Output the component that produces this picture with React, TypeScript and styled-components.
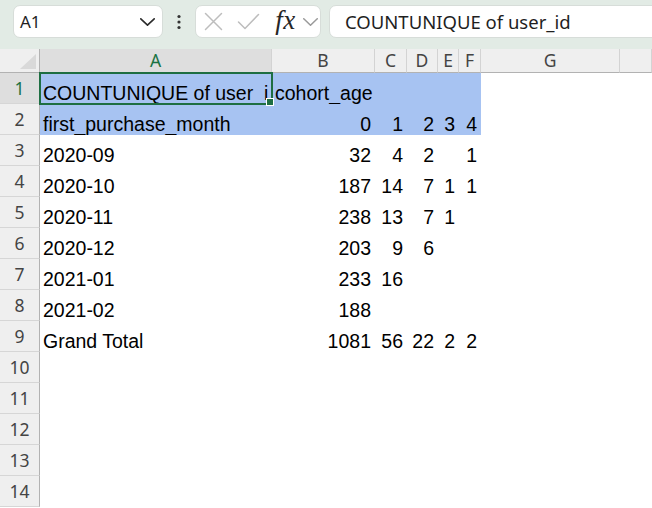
import React from 'react';
import styled, { createGlobalStyle } from 'styled-components';

const GlobalStyle = createGlobalStyle`
  html, body { margin: 0; padding: 0; background: #ffffff; }
  body { width: 652px; height: 508px; overflow: hidden; }
`;

const Window = styled.div`
  width: 652px;
  height: 508px;
  overflow: hidden;
  display: flex;
  flex-direction: column;
  background: #ffffff;
`;

const Toolbar = styled.div`
  height: 49px;
  flex: none;
  box-sizing: border-box;
  background: #e2ebe5;
  display: flex;
  align-items: flex-start;
  padding: 5px 0 0 13px;
  overflow: hidden;
  font-family: 'Noto Sans', 'Open Sans', sans-serif;
`;

const Pill = styled.div`
  height: 33px;
  box-sizing: border-box;
  background: #ffffff;
  border: 1px solid #d7ddd9;
  border-radius: 7px;
  display: flex;
  align-items: center;
  flex: none;
`;

const NameBox = styled(Pill)`
  width: 150px;
  padding: 0 7px 0 6px;
  justify-content: space-between;
  font-size: 17px;
  color: #1f1f1f;
`;

const MoreSlot = styled.div`
  width: 32px;
  height: 33px;
  flex: none;
  display: flex;
  align-items: center;
  justify-content: center;
`;

const FxGroup = styled(Pill)`
  width: 126px;
  padding-left: 7px;
`;

const IconSlot = styled.div<{ $w: number; $gap: number }>`
  width: ${(p) => p.$w}px;
  margin-right: ${(p) => p.$gap}px;
  height: 31px;
  display: flex;
  align-items: center;
  justify-content: center;
  flex: none;
`;

const FxText = styled.span`
  font-family: 'Liberation Serif', 'DejaVu Serif', serif;
  font-style: italic;
  font-size: 27px;
  color: #262626;
  line-height: 1;
  margin-top: -3px;
  letter-spacing: 0.5px;
`;

const FormulaInput = styled(Pill)`
  margin-left: 8px;
  width: 360px;
  padding-left: 15px;
  font-size: 18.5px;
  color: #1f1f1f;
  border-radius: 7px 0 0 7px;
`;

const Sheet = styled.div`
  flex: 1;
  display: grid;
  grid-template-columns: 40px 232px 103px 32px 31px 21px 22px 139px 1fr;
  grid-template-rows: 24px repeat(14, 31px);
  overflow: hidden;
  background: #ffffff;
`;

const Corner = styled.div`
  position: relative;
  box-sizing: border-box;
  background: #efefef;
  border-right: 1px solid #b2b2b2;
  border-bottom: 1px solid #b2b2b2;
  display: flex;
  align-items: flex-end;
  justify-content: flex-end;
  padding: 0 3px 3px 0;
`;

const ColHeader = styled.div<{ $active?: boolean }>`
  box-sizing: border-box;
  background: ${(p) => (p.$active ? '#dedede' : '#efefef')};
  border-right: 1px solid #d3d3d3;
  border-bottom: 1px solid #b2b2b2;
  display: flex;
  align-items: center;
  justify-content: center;
  font-family: 'Noto Sans', 'Open Sans', sans-serif;
  font-size: 17.5px;
  color: ${(p) => (p.$active ? '#1a7343' : '#444444')};
  padding-bottom: 1px;
`;

const RowHeader = styled.div<{ $active?: boolean }>`
  box-sizing: border-box;
  background: ${(p) => (p.$active ? '#dedede' : '#efefef')};
  border-right: 1px solid #b2b2b2;
  border-bottom: 1px solid #d6d6d6;
  display: flex;
  align-items: center;
  justify-content: center;
  font-family: 'Noto Sans', 'Open Sans', sans-serif;
  font-size: 17.5px;
  color: ${(p) => (p.$active ? '#1a7343' : '#444444')};
`;

const Cell = styled.div<{ $num?: boolean; $hl?: boolean }>`
  position: relative;
  box-sizing: border-box;
  background: ${(p) => (p.$hl ? '#a7c3f2' : '#ffffff')};
  display: flex;
  align-items: flex-end;
  justify-content: ${(p) => (p.$num ? 'flex-end' : 'flex-start')};
  padding: 0 4px 0 3px;
  white-space: nowrap;
  overflow: ${(p) => (p.$num ? 'visible' : 'hidden')};
  font-family: 'Liberation Sans', Arial, sans-serif;
  font-size: 19.5px;
  line-height: 22px;
  color: #000000;
`;

const ActiveCell = styled(Cell)`
  overflow: visible;
  z-index: 2;
`;

const Clip = styled.div`
  overflow: hidden;
  width: 100%;
`;

const SelectionFrame = styled.div`
  position: absolute;
  left: -1px;
  top: -1px;
  right: -1px;
  bottom: -1px;
  border: 2px solid #1e6e42;
  pointer-events: none;
`;

const FillHandle = styled.div`
  position: absolute;
  right: -3px;
  bottom: -3px;
  width: 6px;
  height: 6px;
  background: #1e6e42;
  border: 1px solid #ffffff;
`;

const ChevronDown = ({ w, h, color, sw }: { w: number; h: number; color: string; sw: number }) => (
  <svg width={w} height={h} viewBox={`0 0 ${w} ${h}`} fill="none">
    <polyline
      points={`${sw / 2},${sw / 2} ${w / 2},${h - sw / 2} ${w - sw / 2},${sw / 2}`}
      stroke={color}
      strokeWidth={sw}
      strokeLinecap="round"
      strokeLinejoin="round"
    />
  </svg>
);

const COLS = ['A', 'B', 'C', 'D', 'E', 'F', 'G', 'H'];

type Val = string | number | null;

const DATA: Val[][] = [
  ['COUNTUNIQUE of user_id', 'cohort_age', null, null, null, null],
  ['first_purchase_month', 0, 1, 2, 3, 4],
  ['2020-09', 32, 4, 2, null, 1],
  ['2020-10', 187, 14, 7, 1, 1],
  ['2020-11', 238, 13, 7, 1, null],
  ['2020-12', 203, 9, 6, null, null],
  ['2021-01', 233, 16, null, null, null],
  ['2021-02', 188, null, null, null, null],
  ['Grand Total', 1081, 56, 22, 2, 2],
];

export default function App() {
  const rows = Array.from({ length: 14 }, (_, i) => i);
  return (
    <>
      <GlobalStyle />
      <Window>
        <Toolbar>
          <NameBox>
            <span>A1</span>
            <ChevronDown w={15} h={8} color="#2b2b2b" sw={1.6} />
          </NameBox>
          <MoreSlot>
            <svg width="6" height="16" viewBox="0 0 6 16">
              <circle cx="3" cy="2.5" r="1.6" fill="#333" />
              <circle cx="3" cy="8" r="1.6" fill="#333" />
              <circle cx="3" cy="13.5" r="1.6" fill="#333" />
            </svg>
          </MoreSlot>
          <FxGroup>
            <IconSlot $w={21} $gap={13}>
              <svg width="19" height="19" viewBox="0 0 19 19" fill="none">
                <path d="M1.5 1.5 L17.5 17.5 M17.5 1.5 L1.5 17.5" stroke="#bdbdbd" strokeWidth="1.5" strokeLinecap="round" />
              </svg>
            </IconSlot>
            <IconSlot $w={23} $gap={14}>
              <svg width="23" height="17" viewBox="0 0 23 17" fill="none">
                <path d="M1.5 9 L8 15.5 L21.5 1.5" stroke="#bdbdbd" strokeWidth="1.5" strokeLinecap="round" strokeLinejoin="round" />
              </svg>
            </IconSlot>
            <IconSlot $w={23} $gap={6}>
              <FxText>fx</FxText>
            </IconSlot>
            <IconSlot $w={15} $gap={0}>
              <ChevronDown w={15} h={8} color="#9a9a9a" sw={1.5} />
            </IconSlot>
          </FxGroup>
          <FormulaInput>COUNTUNIQUE of user_id</FormulaInput>
        </Toolbar>
        <Sheet>
          <Corner>
            <svg width="16" height="15" viewBox="0 0 16 15">
              <polygon points="16,0 16,15 0,15" fill="#d9d9d9" />
            </svg>
          </Corner>
          {COLS.map((c) => (
            <ColHeader key={c} $active={c === 'A'}>
              {c === 'H' ? '' : c}
            </ColHeader>
          ))}
          {rows.map((r) => {
            const rowData = DATA[r] || [];
            return (
              <React.Fragment key={r}>
                <RowHeader $active={r === 0}>{r + 1}</RowHeader>
                {COLS.map((c, ci) => {
                  const v = ci < 6 ? rowData[ci] ?? null : null;
                  const hl = r < 2 && ci < 6;
                  const isNum = typeof v === 'number';
                  if (r === 0 && ci === 0) {
                    return (
                      <ActiveCell key={c} $hl>
                        <Clip>{v}</Clip>
                        <SelectionFrame>
                          <FillHandle />
                        </SelectionFrame>
                      </ActiveCell>
                    );
                  }
                  return (
                    <Cell key={c} $hl={hl} $num={isNum}>
                      {v === null ? '' : v}
                    </Cell>
                  );
                })}
              </React.Fragment>
            );
          })}
        </Sheet>
      </Window>
    </>
  );
}
